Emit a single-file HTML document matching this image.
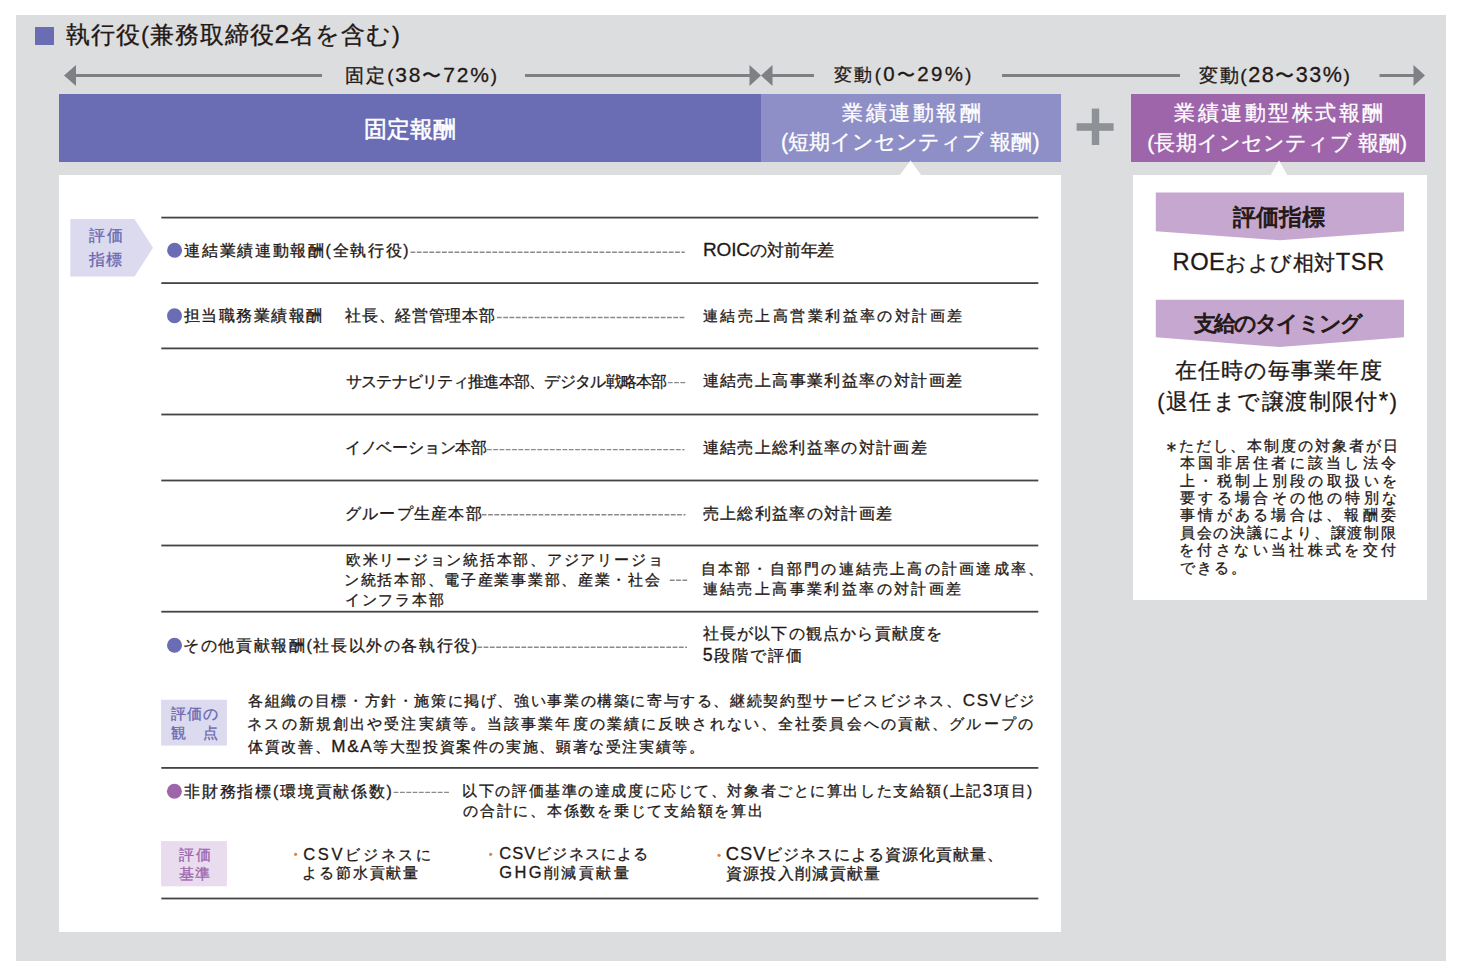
<!DOCTYPE html>
<html lang="ja"><head><meta charset="utf-8"><title>執行役報酬</title><style>
html,body{margin:0;padding:0;width:1464px;height:979px;overflow:hidden;background:#fff;position:relative}
body{font-family:"Liberation Sans",sans-serif}
.t{position:absolute;white-space:nowrap;margin:0;padding:0}.l{font-size:1.12em}.t{-webkit-text-stroke:0.3px currentColor}
</style></head><body>

<div style="position:absolute;left:16px;top:15px;width:1430px;height:946px;background:#dcdddf"></div>
<div style="position:absolute;left:35px;top:27px;width:19px;height:18px;background:#6a6db3"></div>
<div style="position:absolute;left:59px;top:94px;width:702px;height:68px;background:#6a6db3"></div>
<div style="position:absolute;left:761px;top:94px;width:300px;height:68px;background:#8f8fc8"></div>
<div style="position:absolute;left:1131px;top:94px;width:294px;height:68px;background:#9e65ab"></div>
<div style="position:absolute;left:59px;top:175px;width:1002px;height:757px;background:#fff"></div>
<div style="position:absolute;left:1133px;top:175px;width:294px;height:425px;background:#fff"></div>
<svg style="position:absolute;left:0;top:0" width="1464" height="979" viewBox="0 0 1464 979">
 <g fill="#7f8083">
  <rect x="74" y="74" width="248" height="3"/>
  <polygon points="64,75.5 76,65 76,86"/>
  <rect x="525" y="74" width="226" height="3"/>
  <polygon points="761,75.5 749.5,65 749.5,86"/>
  <polygon points="761,75.5 772.5,65 772.5,86"/>
  <rect x="771" y="74" width="43" height="3"/>
  <rect x="1002" y="74" width="178" height="3"/>
  <rect x="1379.5" y="74" width="36" height="3"/>
  <polygon points="1425,75.5 1413.5,65 1413.5,86"/>
 </g>
 <g fill="#8e9196">
  <rect x="1076.6" y="123.2" width="37" height="7.6"/>
  <rect x="1091.8" y="108.6" width="7.4" height="36.4"/>
 </g>
 <polygon fill="#fff" points="899.5,175.5 910.5,160.5 921.5,175.5"/>
 <polygon fill="#fff" points="1270.5,175.5 1279,160.5 1287.5,175.5"/>
 <polygon fill="#dcdaee" points="70.3,219 134.5,219 153,247.8 134.5,276.5 70.3,276.5"/>
 <rect fill="#dcdaee" x="161.1" y="699.8" width="65.8" height="45.8"/>
 <rect fill="#e9dcee" x="161.1" y="841.1" width="65.8" height="45.2"/>
 <polygon fill="#c6a7d0" points="1155.8,192.5 1404,192.5 1404,231.3 1279.9,240.2 1155.8,231.3"/>
 <polygon fill="#c6a7d0" points="1155.8,299.7 1404,299.7 1404,337.3 1279.9,347 1155.8,337.3"/>
 <g fill="#444444">
  <rect x="161.3" y="216.7" width="877" height="1.8"/>
  <rect x="161.3" y="282.2" width="877" height="1.8"/>
  <rect x="161.3" y="347.5" width="877" height="1.8"/>
  <rect x="161.3" y="413.6" width="877" height="1.8"/>
  <rect x="161.3" y="479.6" width="877" height="1.8"/>
  <rect x="161.3" y="544.6" width="877" height="1.8"/>
  <rect x="161.3" y="610.8" width="877" height="1.8"/>
  <rect x="161.3" y="767" width="877" height="1.8"/>
  <rect x="161.3" y="897.6" width="877" height="1.8"/>
 </g>
 <g stroke="#8a8a8a" stroke-width="1.4" stroke-dasharray="4.8 1.5">
  <line x1="410.5" y1="252.3" x2="684.8" y2="252.3"/>
  <line x1="496.9" y1="317.5" x2="685.3" y2="317.5"/>
  <line x1="667.8" y1="382.6" x2="686.8" y2="382.6"/>
  <line x1="486.9" y1="449.6" x2="684.5" y2="449.6"/>
  <line x1="481.8" y1="514.8" x2="685.5" y2="514.8"/>
  <line x1="669.8" y1="580.2" x2="688.5" y2="580.2"/>
  <line x1="477.3" y1="647.2" x2="687" y2="647.2"/>
  <line x1="393.7" y1="792.4" x2="450.3" y2="792.4"/>
 </g>
 <circle fill="#6a6db3" cx="174.6" cy="250.2" r="7.5"/>
 <circle fill="#6a6db3" cx="174.5" cy="315.8" r="7.5"/>
 <circle fill="#6a6db3" cx="174.5" cy="645.2" r="7.5"/>
 <circle fill="#9e65ab" cx="174.4" cy="791.2" r="7.5"/>
 <g fill="#e0833f">
  <circle cx="295.6" cy="854.3" r="1.6"/>
  <circle cx="490.6" cy="854.3" r="1.6"/>
  <circle cx="719" cy="855.3" r="1.6"/>
 </g>
</svg>

<div class="t" id="title_0" style="left:66.21px;top:19.07px;font-size:23.66px;line-height:30.75px;letter-spacing:0.939px;color:#231815;">執行役(兼務取締役<span class="l">2</span>名を含む)</div>
<div class="t" id="fixed_0" style="left:345.47px;top:62.87px;font-size:18.71px;line-height:24.32px;letter-spacing:1.870px;color:#231815;">固定(<span class="l">38</span>〜<span class="l">72%</span>)</div>
<div class="t" id="var1_0" style="left:834.16px;top:62.25px;font-size:18.28px;line-height:23.76px;letter-spacing:2.318px;color:#231815;">変動(<span class="l">0</span>〜<span class="l">29%</span>)</div>
<div class="t" id="var2_0" style="left:1199.21px;top:62.47px;font-size:19.25px;line-height:25.02px;letter-spacing:1.520px;color:#231815;">変動(<span class="l">28</span>〜<span class="l">33%</span>)</div>
<div class="t" id="bar1_0" style="left:364.36px;top:114.84px;font-size:22.58px;line-height:29.35px;letter-spacing:-0.060px;color:#ffffff;-webkit-text-stroke:0.55px currentColor;">固定報酬</div>
<div class="t" id="bar2_0" style="left:842.00px;top:97.57px;font-size:21.18px;line-height:29.00px;letter-spacing:2.538px;color:#ffffff;-webkit-text-stroke:0.30px currentColor;">業績連動報酬</div>
<div class="t" id="bar2_1" style="left:781.05px;top:126.57px;font-size:21.18px;line-height:29.00px;letter-spacing:0.042px;color:#ffffff;-webkit-text-stroke:0.30px currentColor;">(短期インセンティブ 報酬)</div>
<div class="t" id="bar3_0" style="left:1174.05px;top:98.39px;font-size:21.08px;line-height:29.50px;letter-spacing:2.520px;color:#ffffff;-webkit-text-stroke:0.30px currentColor;">業績連動型株式報酬</div>
<div class="t" id="bar3_1" style="left:1147.31px;top:127.89px;font-size:21.08px;line-height:29.50px;letter-spacing:0.138px;color:#ffffff;-webkit-text-stroke:0.30px currentColor;">(長期インセンティブ 報酬)</div>
<div class="t" id="tag1_0" style="left:89.32px;top:223.62px;font-size:16.00px;line-height:24.10px;letter-spacing:1.620px;color:#6a68b0;-webkit-text-stroke:0.30px currentColor;">評価</div>
<div class="t" id="tag1_1" style="left:89.32px;top:247.72px;font-size:16.00px;line-height:24.10px;letter-spacing:0.720px;color:#6a68b0;-webkit-text-stroke:0.30px currentColor;">指標</div>
<div class="t" id="r1a_0" style="left:184.21px;top:240.82px;font-size:15.70px;line-height:20.41px;letter-spacing:1.675px;color:#231815;">連結業績連動報酬(全執行役)</div>
<div class="t" id="r1b_0" style="left:702.89px;top:239.41px;font-size:16.99px;line-height:22.09px;letter-spacing:-0.124px;color:#231815;"><span class="l">ROIC</span>の対前年差</div>
<div class="t" id="r2a_0" style="left:183.63px;top:306.34px;font-size:15.91px;line-height:20.69px;letter-spacing:1.504px;color:#231815;">担当職務業績報酬</div>
<div class="t" id="r2b_0" style="left:345.42px;top:306.34px;font-size:15.91px;line-height:20.69px;letter-spacing:0.664px;color:#231815;">社長、経営管理本部</div>
<div class="t" id="r2c_0" style="left:703.00px;top:306.46px;font-size:15.48px;line-height:20.13px;letter-spacing:2.443px;color:#231815;">連結売上高営業利益率の対計画差</div>
<div class="t" id="r3a_0" style="left:345.79px;top:371.53px;font-size:15.60px;line-height:20.28px;letter-spacing:-0.716px;color:#231815;">サステナビリティ推進本部、デジタル戦略本部</div>
<div class="t" id="r3b_0" style="left:702.63px;top:370.32px;font-size:16.02px;line-height:20.83px;letter-spacing:1.376px;color:#231815;">連結売上高事業利益率の対計画差</div>
<div class="t" id="r4a_0" style="left:344.89px;top:438.24px;font-size:15.90px;line-height:20.67px;letter-spacing:-0.225px;color:#231815;">イノベーション本部</div>
<div class="t" id="r4b_0" style="left:702.63px;top:437.15px;font-size:16.13px;line-height:20.97px;letter-spacing:1.335px;color:#231815;">連結売上総利益率の対計画差</div>
<div class="t" id="r5a_0" style="left:344.89px;top:503.65px;font-size:15.81px;line-height:20.55px;letter-spacing:1.247px;color:#231815;">グループ生産本部</div>
<div class="t" id="r5b_0" style="left:702.63px;top:504.10px;font-size:15.81px;line-height:20.55px;letter-spacing:1.341px;color:#231815;">売上総利益率の対計画差</div>
<div class="t" id="r6a_0" style="left:345.79px;top:549.63px;font-size:14.52px;line-height:20.30px;letter-spacing:1.765px;color:#231815;">欧米リージョン統括本部、アジアリージョ</div>
<div class="t" id="r6a_1" style="left:343.99px;top:569.93px;font-size:14.52px;line-height:20.30px;letter-spacing:1.715px;color:#231815;">ン統括本部、電子産業事業部、産業・社会</div>
<div class="t" id="r6a_2" style="left:344.89px;top:590.23px;font-size:14.52px;line-height:20.30px;letter-spacing:1.765px;color:#231815;">インフラ本部</div>
<div class="t" id="r6b_0" style="left:700.83px;top:559.14px;font-size:15.38px;line-height:20.10px;letter-spacing:2.222px;color:#231815;">自本部・自部門の連結売上高の計画達成率、</div>
<div class="t" id="r6b_1" style="left:702.63px;top:579.24px;font-size:15.38px;line-height:20.10px;letter-spacing:2.404px;color:#231815;">連結売上高事業利益率の対計画差</div>
<div class="t" id="r7a_0" style="left:183.31px;top:634.65px;font-size:16.13px;line-height:20.97px;letter-spacing:1.594px;color:#231815;">その他貢献報酬(社長以外の各執行役)</div>
<div class="t" id="r7b_0" style="left:702.63px;top:624.44px;font-size:15.91px;line-height:20.80px;letter-spacing:1.205px;color:#231815;">社長が以下の観点から貢献度を</div>
<div class="t" id="r7b_1" style="left:702.63px;top:645.24px;font-size:15.91px;line-height:20.80px;letter-spacing:1.836px;color:#231815;"><span class="l">5</span>段階で評価</div>
<div class="t" id="tag2_0" style="left:170.84px;top:704.91px;font-size:15.38px;line-height:18.80px;letter-spacing:0.855px;color:#6a68b0;-webkit-text-stroke:0.30px currentColor;">評価の</div>
<div class="t" id="tag2_1" style="left:170.84px;top:723.71px;font-size:15.38px;line-height:18.80px;letter-spacing:0.855px;color:#6a68b0;-webkit-text-stroke:0.30px currentColor;">観　点</div>
<div class="t" id="para_0" style="left:248.21px;top:689.00px;font-size:15.27px;line-height:23.00px;letter-spacing:1.616px;color:#231815;">各組織の目標・方針・施策に掲げ、強い事業の構築に寄与する、継続契約型サービスビジネス、<span class="l">CSV</span>ビジ</div>
<div class="t" id="para_1" style="left:247.31px;top:712.00px;font-size:15.27px;line-height:23.00px;letter-spacing:2.122px;color:#231815;">ネスの新規創出や受注実績等。当該事業年度の業績に反映されない、全社委員会への貢献、グループの</div>
<div class="t" id="para_2" style="left:248.21px;top:735.00px;font-size:15.27px;line-height:23.00px;letter-spacing:1.616px;color:#231815;">体質改善、<span class="l">M&amp;A</span>等大型投資案件の実施、顕著な受注実績等。</div>
<div class="t" id="r8a_0" style="left:184.16px;top:781.56px;font-size:15.70px;line-height:20.41px;letter-spacing:1.770px;color:#231815;">非財務指標(環境貢献係数)</div>
<div class="t" id="r8b_0" style="left:462.31px;top:780.90px;font-size:15.48px;line-height:19.60px;letter-spacing:1.571px;color:#231815;">以下の評価基準の達成度に応じて、対象者ごとに算出した支給額(上記<span class="l">3</span>項目)</div>
<div class="t" id="r8b_1" style="left:463.21px;top:800.50px;font-size:15.48px;line-height:19.60px;letter-spacing:1.742px;color:#231815;">の合計に、本係数を乗じて支給額を算出</div>
<div class="t" id="tag3_0" style="left:179.21px;top:846.02px;font-size:14.52px;line-height:18.50px;letter-spacing:1.710px;color:#9c64ae;-webkit-text-stroke:0.30px currentColor;">評価</div>
<div class="t" id="tag3_1" style="left:179.21px;top:864.52px;font-size:14.52px;line-height:18.50px;letter-spacing:0.810px;color:#9c64ae;-webkit-text-stroke:0.30px currentColor;">基準</div>
<div class="t" id="b1_0" style="left:303.21px;top:845.02px;font-size:14.73px;line-height:19.00px;letter-spacing:2.687px;color:#231815;"><span class="l">CSV</span>ビジネスに</div>
<div class="t" id="b1_1" style="left:302.31px;top:864.02px;font-size:14.73px;line-height:19.00px;letter-spacing:1.815px;color:#231815;">よる節水貢献量</div>
<div class="t" id="b2_0" style="left:499.21px;top:844.12px;font-size:14.73px;line-height:19.00px;letter-spacing:1.090px;color:#231815;"><span class="l">CSV</span>ビジネスによる</div>
<div class="t" id="b2_1" style="left:499.21px;top:863.12px;font-size:14.73px;line-height:19.00px;letter-spacing:2.404px;color:#231815;"><span class="l">GHG</span>削減貢献量</div>
<div class="t" id="b3_0" style="left:725.84px;top:843.90px;font-size:16.34px;line-height:19.60px;letter-spacing:0.967px;color:#231815;"><span class="l">CSV</span>ビジネスによる資源化貢献量、</div>
<div class="t" id="b3_1" style="left:725.84px;top:863.50px;font-size:16.34px;line-height:19.60px;letter-spacing:1.305px;color:#231815;">資源投入削減貢献量</div>
<div class="t" id="h1_0" style="left:1233.33px;top:202.63px;font-size:22.90px;line-height:29.77px;letter-spacing:-0.180px;color:#231815;-webkit-text-stroke:0.95px currentColor;">評価指標</div>
<div class="t" id="roe_0" style="left:1172.52px;top:249.41px;font-size:21.18px;line-height:27.54px;letter-spacing:0.486px;color:#231815;"><span class="l">ROE</span>および相対<span class="l">TSR</span></div>
<div class="t" id="h2_0" style="left:1193.73px;top:309.97px;font-size:21.60px;line-height:28.08px;letter-spacing:-1.813px;color:#231815;-webkit-text-stroke:0.95px currentColor;">支給のタイミング</div>
<div class="t" id="tim_0" style="left:1174.63px;top:356.46px;font-size:21.61px;line-height:29.30px;letter-spacing:1.057px;color:#231815;">在任時の毎事業年度</div>
<div class="t" id="tim_1" style="left:1157.31px;top:385.76px;font-size:21.61px;line-height:29.30px;letter-spacing:1.432px;color:#231815;">(退任まで譲渡制限付<span class="l">*</span>)</div>
<div class="t" id="star_0" style="left:1161.05px;top:435.86px;font-size:21.11px;line-height:27.45px;letter-spacing:0.000px;color:#231815;">＊</div>
<div class="t" id="note_0" style="left:1179.10px;top:437.70px;font-size:14.63px;line-height:17.40px;letter-spacing:2.025px;color:#231815;">ただし、本制度の対象者が日</div>
<div class="t" id="note_1" style="left:1180.00px;top:455.10px;font-size:14.63px;line-height:17.40px;letter-spacing:3.273px;color:#231815;">本国非居住者に該当し法令</div>
<div class="t" id="note_2" style="left:1180.00px;top:472.50px;font-size:14.63px;line-height:17.40px;letter-spacing:3.355px;color:#231815;">上・税制上別段の取扱いを</div>
<div class="t" id="note_3" style="left:1180.00px;top:489.90px;font-size:14.63px;line-height:17.40px;letter-spacing:3.355px;color:#231815;">要する場合その他の特別な</div>
<div class="t" id="note_4" style="left:1180.00px;top:507.30px;font-size:14.63px;line-height:17.40px;letter-spacing:3.273px;color:#231815;">事情がある場合は、報酬委</div>
<div class="t" id="note_5" style="left:1180.00px;top:524.70px;font-size:14.63px;line-height:17.40px;letter-spacing:1.725px;color:#231815;">員会の決議により、譲渡制限</div>
<div class="t" id="note_6" style="left:1179.10px;top:542.10px;font-size:14.63px;line-height:17.40px;letter-spacing:3.355px;color:#231815;">を付さない当社株式を交付</div>
<div class="t" id="note_7" style="left:1180.00px;top:559.50px;font-size:14.63px;line-height:17.40px;letter-spacing:2.025px;color:#231815;">できる。</div>
</body></html>
